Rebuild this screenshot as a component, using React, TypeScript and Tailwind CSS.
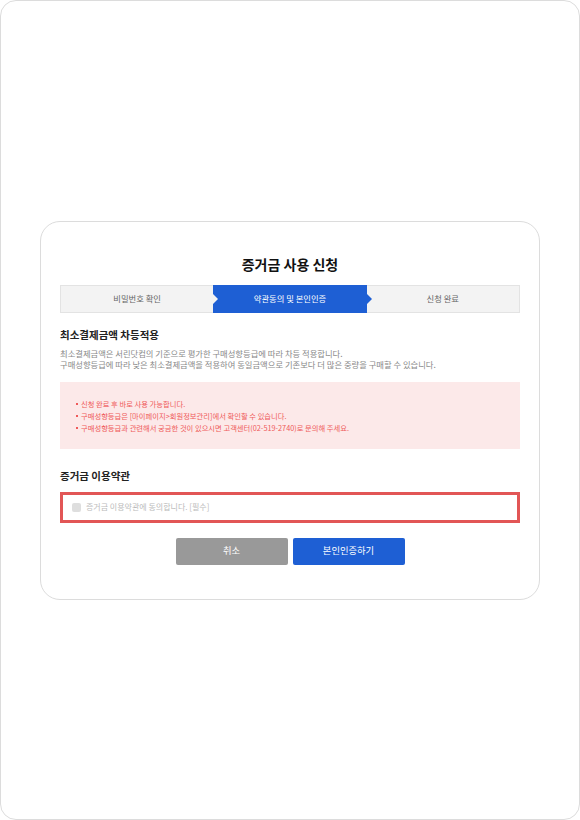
import React from 'react';

const font = { fontFamily: '"Noto Sans CJK KR", "Noto Sans", sans-serif' };

const steps = ['비밀번호 확인', '약관동의 및 본인인증', '신청 완료'];

const notices = [
  '신청 완료 후 바로 사용 가능합니다.',
  '구매성향등급은 [마이페이지>회원정보관리]에서 확인할 수 있습니다.',
  '구매성향등급과 관련해서 궁금한 것이 있으시면 고객센터(02-519-2740)로 문의해 주세요.',
];

function StepBar() {
  return (
    <div className="mt-[13px] grid h-[28px] grid-cols-3">
      {/* step 1 */}
      <div className="relative flex items-center justify-center border-y border-l border-[#e3e3e3] bg-[#f3f3f3] text-[8.3px] text-[#666]">
        {steps[0]}
        <span className="absolute -right-[5px] top-1/2 z-10 h-0 w-0 -translate-y-1/2 border-y-[5px] border-l-[5px] border-y-transparent border-l-[#f3f3f3]" />
      </div>
      {/* step 2 (active) */}
      <div className="relative flex items-center justify-center bg-[#1e5fd4] text-[8.3px] text-white">
        {steps[1]}
        <span className="absolute -right-[5px] top-1/2 z-10 h-0 w-0 -translate-y-1/2 border-y-[5px] border-l-[5px] border-y-transparent border-l-[#1e5fd4]" />
      </div>
      {/* step 3 */}
      <div className="flex items-center justify-center border-y border-r border-[#e3e3e3] bg-[#f3f3f3] text-[8.3px] text-[#666]">
        {steps[2]}
      </div>
    </div>
  );
}

export default function App() {
  return (
    <div className="h-[820px] w-[580px] bg-white" style={font}>
      <div className="flex h-full w-full items-center justify-center rounded-[16px] border border-[#dcdcdc] bg-white">
        <div className="flex w-[500px] flex-col rounded-[20px] border border-[#dcdcdc] bg-white px-[19px] pb-[34px] pt-[34px]">
          <h1 className="text-center text-[14px] font-bold leading-[16px] text-[#111]">
            증거금 사용 신청
          </h1>

          <StepBar />

          <h2 className="mt-[15px] text-[10.5px] font-bold leading-[14px] text-[#222]">
            최소결제금액 차등적용
          </h2>
          <p className="mt-[6px] text-[8.3px] leading-[11px] text-[#888]">
            최소결제금액은 서린닷컴의 기준으로 평가한 구매성향등급에 따라 차등 적용합니다.
            <br />
            구매성향등급에 따라 낮은 최소결제금액을 적용하여 동일금액으로 기존보다 더 많은 중량을 구매할 수 있습니다.
          </p>

          <div className="mt-[12px] bg-[#fce9e9] pb-[15px] pl-[16px] pt-[16px]">
            <ul className="flex flex-col">
              {notices.map((n) => (
                <li key={n} className="flex items-center gap-[3px] text-[7.3px] leading-[12px] text-[#ef5a5a]">
                  <span className="inline-block h-[2px] w-[2px] bg-[#ef5a5a]" />
                  {n}
                </li>
              ))}
            </ul>
          </div>

          <h2 className="mt-[20px] text-[10.5px] font-bold leading-[14px] text-[#222]">
            증거금 이용약관
          </h2>

          <label className="mt-[9px] flex h-[31px] items-center gap-[5px] border-[3px] border-[#e25656] pl-[9px]">
            <span className="inline-block h-[9px] w-[9px] rounded-[2px] bg-[#dedede]" />
            <span className="text-[8px] text-[#bbb]">증거금 이용약관에 동의합니다. [필수]</span>
          </label>

          <div className="mt-[15px] flex justify-center gap-[5px]">
            <button className="h-[27px] w-[112px] rounded-[2px] bg-[#999] text-[9.3px] text-white">
              취소
            </button>
            <button className="h-[27px] w-[112px] rounded-[2px] bg-[#1e5fd4] text-[9.3px] text-white">
              본인인증하기
            </button>
          </div>
        </div>
      </div>
    </div>
  );
}
